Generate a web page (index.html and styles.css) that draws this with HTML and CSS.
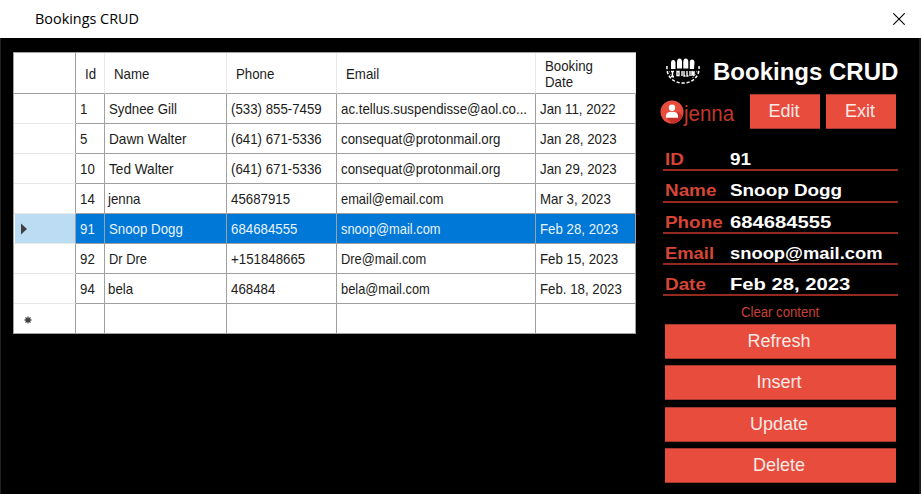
FILE: index.html
```
<!DOCTYPE html>
<html lang="en">
<head>
<meta charset="utf-8">
<title>Bookings CRUD</title>
<link rel="stylesheet" href="styles.css">
</head>
<body>
<div class="window">
  <header class="titlebar">
    <span class="caption">Bookings CRUD</span>
    <svg class="close" viewBox="0 0 12 12" width="12" height="12"><path d="M.3.3l11.4 11.4M11.700.3L.3 11.700" stroke="#000" stroke-width="1.1" fill="none"/></svg>
  </header>
  <main class="content">
    <section class="table">
      <div class="row head"><div></div><div><span>Id</span></div><div><span>Name</span></div><div><span>Phone</span></div><div><span>Email</span></div><div><span>Booking<br>Date</span></div></div>
      <div class="row"><div></div><div><span>1</span></div><div><span>Sydnee Gill</span></div><div><span>(533) 855-7459</span></div><div><span>ac.tellus.suspendisse@aol.co...</span></div><div><span>Jan 11, 2022</span></div></div>
      <div class="row"><div></div><div><span>5</span></div><div><span class="wide">Dawn Walter</span></div><div><span>(641) 671-5336</span></div><div><span>consequat@protonmail.org</span></div><div><span>Jan 28, 2023</span></div></div>
      <div class="row"><div></div><div><span>10</span></div><div><span class="wide">Ted Walter</span></div><div><span>(641) 671-5336</span></div><div><span>consequat@protonmail.org</span></div><div><span>Jan 29, 2023</span></div></div>
      <div class="row"><div></div><div><span>14</span></div><div class="tight"><span>jenna</span></div><div><span>45687915</span></div><div><span class="narrow">email@email.com</span></div><div><span>Mar 3, 2023</span></div></div>
      <div class="row selected"><div><svg width="8" height="12" viewBox="0 0 8 12"><path d="M1 .5L7 6 1 11.500z" fill="#404040"/></svg></div><div><span>91</span></div><div><span>Snoop Dogg</span></div><div><span>684684555</span></div><div><span class="narrow">snoop@mail.com</span></div><div><span>Feb 28, 2023</span></div></div>
      <div class="row"><div></div><div><span>92</span></div><div><span class="narrow">Dr Dre</span></div><div><span>+151848665</span></div><div><span class="narrow">Dre@mail.com</span></div><div><span>Feb 15, 2023</span></div></div>
      <div class="row"><div></div><div><span>94</span></div><div class="tight"><span>bela</span></div><div><span>468484</span></div><div><span class="narrow">bela@mail.com</span></div><div><span>Feb. 18, 2023</span></div></div>
      <div class="row new"><div><svg width="8" height="8" viewBox="0 0 8 8"><path d="M4 .5v7M.5 4h7M1.500 1.500l5 5M6.500 1.500l-5 5" stroke="#404040" stroke-width="1.300"/></svg></div><div></div><div></div><div></div><div></div><div></div></div>
    </section>
    <aside class="panel">
      <div class="brand">
        <svg class="logo" width="36" height="28" viewBox="0 0 36 28">
          <g fill="#fff"><path d="M6 12V6q0-3 2.200-3t2.300 3v6zM12 11.500V5q0-3.500 2.500-3.500T17 5v6.500zM18.300 11.500V5q0-3.500 2.500-3.500T23.300 5v6.500zM24.800 12V5.500q0-3 2.300-3t2.400 3L29 12z"/></g>
          <path d="M6 14.500h3M7.500 14.500v5M6 19.500h3M12 14.500h2v4h-2zM17 14v5M19 14v5h1.500M22 14v5h1.500M25 14v5M27 19v-5l2 5v-5" fill="none" stroke="#fff" stroke-width="1.400"/>
          <path d="M2 9C1 20 9 26 18 26S35 20 34 9" fill="none" stroke="#fff" stroke-width="1.500" stroke-dasharray="3.200 1.800"/>
          <path d="M4 14l1.500 3 3 4M32 14l-1.500 3-3 4" fill="none" stroke="#aaa" stroke-dasharray="1.500 2"/>
        </svg>
        <h1><span>Bookings CRUD</span></h1>
      </div>
      <div class="account">
        <svg width="24" height="24" viewBox="0 0 24 24"><circle cx="12" cy="12" r="11.500" fill="#e74c3c"/><path d="M18 12l5 3.500A11.500 11.500 0 0 1 12 23.500L6.500 18z" fill="#c6302b"/><circle cx="12" cy="7.800" r="3.200" fill="#fff"/><path d="M6 17.700v-1.700q0-4.200 6-4.200t6 4.200v1.700z" fill="#fff"/></svg>
        <span class="user"><span>jenna</span></span>
        <button class="edit"><span>Edit</span></button>
        <button><span>Exit</span></button>
      </div>
      <dl class="fields">
        <div><dt><span>ID</span></dt><dd><span>91</span></dd></div>
        <div><dt><span>Name</span></dt><dd><span>Snoop Dogg</span></dd></div>
        <div><dt><span>Phone</span></dt><dd><span class="digits">684684555</span></dd></div>
        <div><dt><span class="slim">Email</span></dt><dd><span class="slim">snoop@mail.com</span></dd></div>
        <div><dt><span>Date</span></dt><dd><span class="digits">Feb 28, 2023</span></dd></div>
      </dl>
      <div class="clear"><span>Clear content</span></div>
      <div class="actions">
        <button><span>Refresh</span></button>
        <button><span>Insert</span></button>
        <button><span>Update</span></button>
        <button><span>Delete</span></button>
      </div>
    </aside>
  </main>
</div>
</body>
</html>
```
FILE: styles.css
```
* { box-sizing: border-box; }
body { margin: 0; background: #000; font-family: "Liberation Sans", Arial, sans-serif; }
span { display: inline-block; white-space: nowrap; transform-origin: left center; }
.window { width: 921px; height: 494px; overflow: hidden; background: #000; }
.titlebar { display: flex; align-items: center; justify-content: space-between; height: 38px; padding: 0 16px 0 35px; background: #fff; }
.caption { margin-bottom: 2px; font: 15px/20px "Open Sans", sans-serif; color: #000; transform: scaleX(.96); }
.close { display: block; }
.content { display: flex; height: 456px; padding-top: 14px; border-left: 1px solid #222; border-right: 2px solid #1c1c1c; }

.table { flex: none; width: 623px; height: 282px; margin-left: 12px; border-top: 1px solid #a0a0a0; border-left: 1px solid #a0a0a0; background: #fff; font-size: 14.5px; line-height: 16px; color: #1c1c20; }
.row { display: grid; grid-template-columns: 62px 29px 122px 110px 199px 100px; height: 30px; }
.row > div { display: flex; align-items: center; padding-left: 4px; border-right: 1px solid #a0a0a0; border-bottom: 1px solid #a0a0a0; overflow: hidden; }
.row > div:first-child { padding-left: 6px; border-bottom-color: #e8e8e8; }
.row > .tight { padding-left: 3px; }
.row span { transform: scaleX(.915); }
.row .wide { transform: scaleX(.94); }
.row .narrow { transform: scaleX(.887); }
.head { height: 41px; }
.head > div { padding-left: 9px; padding-top: 1px; border-right-color: #e8e8e8; }
.head > div:first-child { border-right-color: #a0a0a0; border-bottom-color: #a0a0a0; }
.selected > div { background: #0078d7; color: #e8f3ff; }
.selected > div:first-child { background: #bcdcf4; box-shadow: inset 1px 0 #fff; }
.new > div:first-child { padding-left: 10px; padding-top: 3px; border-bottom-color: #a0a0a0; }

.panel { width: 240px; margin-left: 24px; }
.brand { display: flex; height: 40px; padding: 5px 0 0 5px; }
.brand h1 { margin: 0 0 0 12px; font-size: 24px; line-height: 30px; color: #fff; }
.account { display: flex; align-items: center; height: 38px; padding-top: 1px; }
.user { width: 66px; height: 30px; font-size: 22px; line-height: 34px; color: #c0392b; }
.user span { transform: scaleX(.93); }
button { display: block; width: 70px; height: 35px; margin: 0; padding: 0; border: 1px solid #a8392e; border-width: 1px 0; background: #e74c3c; color: #fbe9e7; font: 18px/33px "Liberation Sans", Arial, sans-serif; }
button span { transform-origin: center; }
.account button { padding-right: 2px; }
.edit { margin-right: 6px; }
.fields { width: 235px; margin: 10px 0 0 3px; }
.fields > div { display: flex; height: 31.3px; padding: 9px 0 0 2px; border-bottom: 2px solid #93291f; font-weight: bold; font-size: 17px; line-height: 21px; }
.fields span { transform: scaleX(1.11); }
.fields .slim { transform: scaleX(1.08); }
.fields .digits { transform: scaleX(1.19); }
dt { width: 65px; color: #d64535; }
dd { margin: 0; color: #fff; }
.clear { height: 27.5px; padding: 6px 0 0 81px; font-size: 14px; line-height: 20px; color: #c94132; }
.clear span { transform: scaleX(.94); }
.actions { display: grid; gap: 6.3px; padding-left: 5px; }
.actions button { width: 231px; padding-right: 3px; }
```
